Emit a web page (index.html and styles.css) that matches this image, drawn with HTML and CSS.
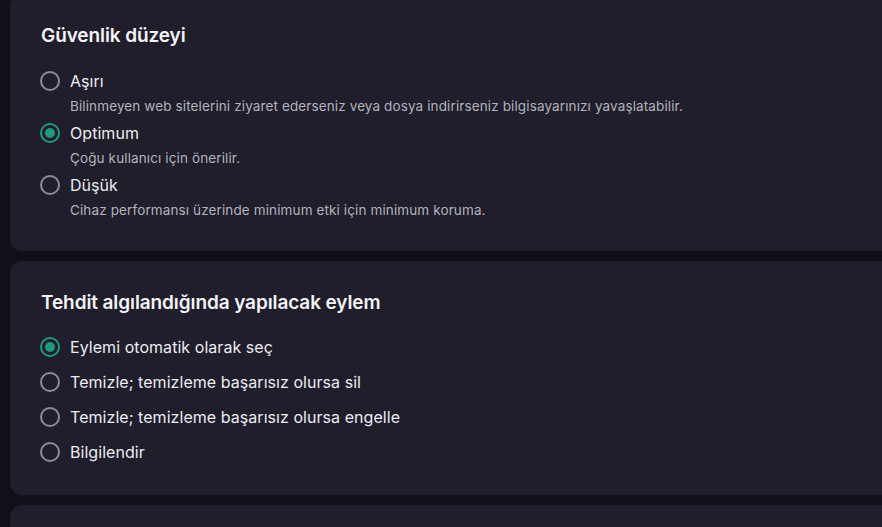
FILE: index.html
```html
<!DOCTYPE html>
<html lang="tr">
<head>
<meta charset="utf-8">
<title>Ayarlar</title>
<link rel="stylesheet" href="styles.css">
</head>
<body>
<div class="list">
  <section class="card">
    <h2 class="card-title">Güvenlik düzeyi</h2>
    <div class="options options-desc">
      <label class="option">
        <span class="radio"></span>
        <span class="option-body">
          <span class="option-label">Aşırı</span>
          <span class="option-desc">Bilinmeyen web sitelerini ziyaret ederseniz veya dosya indirirseniz bilgisayarınızı yavaşlatabilir.</span>
        </span>
      </label>
      <label class="option">
        <span class="radio checked"></span>
        <span class="option-body">
          <span class="option-label">Optimum</span>
          <span class="option-desc">Çoğu kullanıcı için önerilir.</span>
        </span>
      </label>
      <label class="option">
        <span class="radio"></span>
        <span class="option-body">
          <span class="option-label">Düşük</span>
          <span class="option-desc">Cihaz performansı üzerinde minimum etki için minimum koruma.</span>
        </span>
      </label>
    </div>
  </section>

  <section class="card card-second">
    <h2 class="card-title">Tehdit algılandığında yapılacak eylem</h2>
    <div class="options options-plain">
      <label class="option">
        <span class="radio checked"></span>
        <span class="option-label">Eylemi otomatik olarak seç</span>
      </label>
      <label class="option">
        <span class="radio"></span>
        <span class="option-label">Temizle; temizleme başarısız olursa sil</span>
      </label>
      <label class="option">
        <span class="radio"></span>
        <span class="option-label">Temizle; temizleme başarısız olursa engelle</span>
      </label>
      <label class="option">
        <span class="radio"></span>
        <span class="option-label">Bilgilendir</span>
      </label>
    </div>
  </section>

  <section class="card card-empty"></section>
</div>
</body>
</html>
```

FILE: styles.css
```css
html, body {
  margin: 0;
  padding: 0;
  background: #101018;
  overflow: hidden;
  height: 527px;
}

body {
  font-family: Inter, "Noto Sans", sans-serif;
  color: #ececf1;
}

.list {
  display: flex;
  flex-direction: column;
  gap: 10px;
  margin-top: -6px;
  padding-left: 10px;
  width: 900px;
}

.card {
  background: #1f1e2a;
  border-radius: 12px;
  padding: 29px 30px 31px 30px;
}

.card-second {
  padding-top: 29px;
  padding-bottom: 31px;
}

.card-second .card-title {
  margin-bottom: 19px;
}

.card-empty {
  height: 120px;
  padding: 0;
}

.card-title {
  margin: 0 0 20px 1px;
  font-size: 19px;
  line-height: 26px;
  font-weight: 600;
  color: #f4f4f8;
  letter-spacing: -0.1px;
}

.options {
  display: flex;
  flex-direction: column;
}

.options-desc {
  gap: 5px;
}

.options-plain {
  gap: 11px;
}

.option {
  display: flex;
  align-items: flex-start;
  gap: 10px;
}

.option-body {
  display: flex;
  flex-direction: column;
  gap: 3px;
}

.option-label {
  font-size: 16px;
  line-height: 24px;
  color: #ececf1;
  letter-spacing: 0.05px;
}

.option-desc {
  font-size: 13.5px;
  line-height: 20px;
  color: #b3b3bd;
  letter-spacing: 0.12px;
}

.radio {
  flex: none;
  box-sizing: border-box;
  width: 20px;
  height: 20px;
  margin-top: 2px;
  border-radius: 50%;
  border: 2px solid #8c8c96;
  display: flex;
  align-items: center;
  justify-content: center;
}

.radio.checked {
  border-color: #1b9a7f;
}

.radio.checked::after {
  content: "";
  width: 10px;
  height: 10px;
  border-radius: 50%;
  background: #1b9a7f;
}
```
